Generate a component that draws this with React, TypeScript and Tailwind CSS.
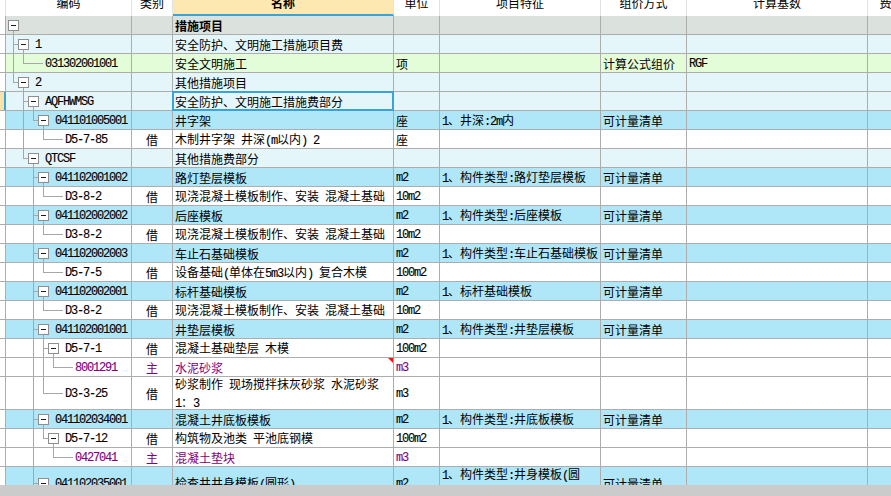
import React from "react";

type R = {
  lv: number;
  box?: boolean;
  down?: boolean;
  last?: boolean;
  pass?: number[];
  code?: string;
  kind?: string;
  name?: string;
  name2?: string;
  unit?: string;
  feat?: string;
  feat2?: string;
  way?: string;
  base?: string;
  bg: string;
  tall?: boolean;
  purple?: boolean;
  sel?: boolean;
  flag?: boolean;
  bold?: boolean;
};

const GRAY = "bg-[#dbe1dd]";
const LC = "bg-[#e5f6fb]";
const LG = "bg-[#e3fdd8]";
const CY = "bg-[#b0e7f8]";
const W = "bg-white";

const mono = "font-['Liberation_Mono',monospace] text-[12px] tracking-[-1.2px] [-webkit-text-stroke:0.12px]";

// ascii runs are set in a narrow mono face, like the half-width glyphs of the original
const mix = (s?: string) =>
  (s ?? "")
    .split(/([\x20-\x7e]+)/)
    .filter(Boolean)
    .map((p, i) =>
      /^[\x20-\x7e]+$/.test(p) ? (
        <span key={i} className={mono}>
          {p}
        </span>
      ) : (
        <span key={i}>{p}</span>
      )
    );

const rows: R[] = [
  { lv: 0, box: true, down: true, bg: GRAY, name: "措施项目", bold: true },
  { lv: 1, box: true, down: true, last: false, code: "1", bg: LC, name: "安全防护、文明施工措施项目费" },
  { lv: 2, last: true, pass: [13], code: "031302001001", bg: LG, name: "安全文明施工", unit: "项", way: "计算公式组价", base: "RGF" },
  { lv: 1, box: true, down: true, last: true, code: "2", bg: LC, name: "其他措施项目" },
  { lv: 2, box: true, down: true, last: false, code: "AQFHWMSG", bg: LC, name: "安全防护、文明施工措施费部分", sel: true },
  { lv: 3, box: true, down: true, last: true, pass: [23], code: "041101005001", bg: CY, name: "井字架", unit: "座", feat: "1、井深:2m内", way: "可计量清单" },
  { lv: 4, last: true, pass: [23], code: "D5-7-85", kind: "借", bg: W, name: "木制井字架 井深(m以内) 2", unit: "座" },
  { lv: 2, box: true, down: true, last: true, code: "QTCSF", bg: LC, name: "其他措施费部分" },
  { lv: 3, box: true, down: true, code: "041102001002", bg: CY, name: "路灯垫层模板", unit: "m2", feat: "1、构件类型:路灯垫层模板", way: "可计量清单" },
  { lv: 4, last: true, pass: [33], code: "D3-8-2", kind: "借", bg: W, name: "现浇混凝土模板制作、安装 混凝土基础", unit: "10m2" },
  { lv: 3, box: true, down: true, code: "041102002002", bg: CY, name: "后座模板", unit: "m2", feat: "1、构件类型:后座模板", way: "可计量清单" },
  { lv: 4, last: true, pass: [33], code: "D3-8-2", kind: "借", bg: W, name: "现浇混凝土模板制作、安装 混凝土基础", unit: "10m2" },
  { lv: 3, box: true, down: true, code: "041102002003", bg: CY, name: "车止石基础模板", unit: "m2", feat: "1、构件类型:车止石基础模板", way: "可计量清单" },
  { lv: 4, last: true, pass: [33], code: "D5-7-5", kind: "借", bg: W, name: "设备基础(单体在5m3以内) 复合木模", unit: "100m2" },
  { lv: 3, box: true, down: true, code: "041102002001", bg: CY, name: "标杆基础模板", unit: "m2", feat: "1、标杆基础模板", way: "可计量清单" },
  { lv: 4, last: true, pass: [33], code: "D3-8-2", kind: "借", bg: W, name: "现浇混凝土模板制作、安装 混凝土基础", unit: "10m2" },
  { lv: 3, box: true, down: true, code: "041102001001", bg: CY, name: "井垫层模板", unit: "m2", feat: "1、构件类型:井垫层模板", way: "可计量清单" },
  { lv: 4, box: true, down: true, pass: [33], code: "D5-7-1", kind: "借", bg: W, name: "混凝土基础垫层 木模", unit: "100m2" },
  { lv: 5, last: true, pass: [33, 43], code: "8001291", kind: "主", bg: W, name: "水泥砂浆", unit: "m3", purple: true, flag: true },
  { lv: 4, last: true, pass: [33], code: "D3-3-25", kind: "借", bg: W, name: "砂浆制作 现场搅拌抹灰砂浆 水泥砂浆", name2: "1：3", unit: "m3", tall: true },
  { lv: 3, box: true, down: true, code: "041102034001", bg: CY, name: "混凝土井底板模板", unit: "m2", feat: "1、构件类型:井底板模板", way: "可计量清单" },
  { lv: 4, box: true, down: true, last: true, pass: [33], code: "D5-7-12", kind: "借", bg: W, name: "构筑物及池类 平池底钢模", unit: "100m2" },
  { lv: 5, last: true, pass: [33], code: "0427041", kind: "主", bg: W, name: "混凝土垫块", unit: "m3", purple: true },
  { lv: 3, box: true, down: true, code: "041102035001", bg: CY, name: "检查井井身模板(圆形)", unit: "m2", feat: "1、构件类型:井身模板(圆", feat2: "形)", way: "可计量清单", tall: true },
];

const line = "absolute w-px bg-[#a7a7a7]";

const Tree = ({ r, h }: { r: R; h: number }) => {
  const mid = Math.floor(h / 2);
  const L = r.lv;
  const out: React.ReactNode[] = [];
  (r.pass ?? []).forEach((x) =>
    out.push(<div key={"p" + x} className={`${line} top-0 bottom-0`} style={{ left: x - 6 }} />)
  );
  if (L > 0) {
    const px = 3 + 10 * L - 6;
    const end = r.box ? 8 + 10 * L - 6 : 23 + 10 * L - 6;
    out.push(
      r.last ? (
        <div key="up" className={`${line} top-0`} style={{ left: px, height: mid + 1 }} />
      ) : (
        <div key="up" className={`${line} top-0 bottom-0`} style={{ left: px }} />
      )
    );
    out.push(<div key="hz" className="absolute h-px bg-[#a7a7a7]" style={{ left: px, top: mid, width: end - px }} />);
  }
  if (r.box) {
    const bx = 8 + 10 * L - 6;
    if (r.down) out.push(<div key="dn" className={`${line} bottom-0`} style={{ left: bx + 5, top: mid + 5 }} />);
    out.push(
      <div key="bx" className="absolute w-[11px] h-[11px] border border-[#8e8e8e] bg-white" style={{ left: bx, top: mid - 5 }}>
        <div className="absolute left-[2px] top-[4px] w-[5px] h-px bg-[#1a1a1a]" />
      </div>
    );
  }
  return <>{out}</>;
};

const cell = "shrink-0 h-full border-r border-[#adadad] overflow-hidden flex items-center";

const Row = ({ r }: { r: R }) => {
  const h = r.tall ? 32 : 18;
  const tc = r.purple ? "text-[#800080]" : "text-black";
  return (
    <div className={`flex shrink-0 border-b border-[#adadad] ${r.tall ? "h-[33px]" : "h-[19px]"} ${r.bg}`}>
      {r.sel ? (
        <div className="shrink-0 h-full w-[6px] flex">
          <div className="w-[4px] h-full bg-[#fbe2a6]" />
          <div className="w-[2px] h-full bg-[#3aa3d8]" />
        </div>
      ) : (
        <div className={`${cell} w-[6px] bg-white`} />
      )}
      <div className={`${cell} w-[126px] relative ${tc}`}>
        <Tree r={r} h={h} />
        <span className={`${mono} relative whitespace-nowrap pt-px`} style={{ paddingLeft: 19 + 10 * r.lv }}>
          {r.code}
        </span>
      </div>
      <div className={`${cell} w-[41px] justify-center pt-px ${tc}`}>{r.kind}</div>
      <div
        className={`shrink-0 h-full border-r border-[#adadad] flex items-center w-[221px] pl-[2px] pt-px relative ${tc} ${
          r.bold ? "font-bold" : ""
        } ${r.sel ? "overflow-visible" : "overflow-hidden"}`}
      >
        {r.name2 ? (
          <div className="flex flex-col">
            <div className="whitespace-nowrap">{mix(r.name)}</div>
            <div className="whitespace-nowrap">{mix(r.name2)}</div>
          </div>
        ) : (
          <span className="whitespace-nowrap">{mix(r.name)}</span>
        )}
        {r.sel && <div className="absolute -top-px -left-px -right-px -bottom-px border-2 border-[#3aa3d8]" />}
        {r.flag && (
          <div className="absolute top-0 right-0 w-0 h-0 border-t-[5px] border-t-[#ff1010] border-l-[5px] border-l-transparent" />
        )}
      </div>
      <div className={`${cell} w-[46px] pl-[2px] pt-px whitespace-nowrap ${tc}`}>{mix(r.unit)}</div>
      <div className={`${cell} w-[161px] pl-[2px] pt-px`}>
        {r.feat2 ? (
          <div className="flex flex-col">
            <div className="whitespace-nowrap">{mix(r.feat)}</div>
            <div className="whitespace-nowrap">{mix(r.feat2)}</div>
          </div>
        ) : (
          <span className="whitespace-nowrap">{mix(r.feat)}</span>
        )}
      </div>
      <div className={`${cell} w-[86px] pl-[2px] pt-px whitespace-nowrap`}>{r.way}</div>
      <div className={`${cell} w-[181px] pl-[2px] pt-px whitespace-nowrap`}>{mix(r.base)}</div>
      <div className={`${cell} w-[72px]`} />
    </div>
  );
};

const heads: [string, string][] = [
  ["", "w-[6px]"],
  ["编码", "w-[126px]"],
  ["类别", "w-[41px]"],
  ["名称", "w-[221px]"],
  ["单位", "w-[46px]"],
  ["项目特征", "w-[161px]"],
  ["组价方式", "w-[86px]"],
  ["计算基数", "w-[181px]"],
  ["费用类别", "w-[72px]"],
];

export default function App() {
  return (
    <div className="w-[891px] h-[496px] overflow-hidden bg-white flex flex-col font-['Noto_Sans_CJK_SC',sans-serif] text-[12px] leading-[16px] text-black">
      <div className="flex-1 min-h-0 overflow-hidden flex flex-col">
        <div className="flex shrink-0 h-[16px] bg-white">
          {heads.map(([t, w]) => (
            <div
              key={t + w}
              className={`shrink-0 h-full overflow-hidden flex justify-center items-start ${w} ${
                t === "名称"
                  ? "bg-[#fde8b2] border-b-2 border-b-[#3aa3d8] border-r border-r-[#e2e2e2] font-bold"
                  : "border-r border-[#e2e2e2]"
              }`}
            >
              <span className="-mt-[3px] leading-[12px] whitespace-nowrap">{t}</span>
            </div>
          ))}
        </div>
        {rows.map((r, i) => (
          <Row key={i} r={r} />
        ))}
      </div>
      <div className="h-[11px] shrink-0 bg-[#cbcbcb]" />
    </div>
  );
}
